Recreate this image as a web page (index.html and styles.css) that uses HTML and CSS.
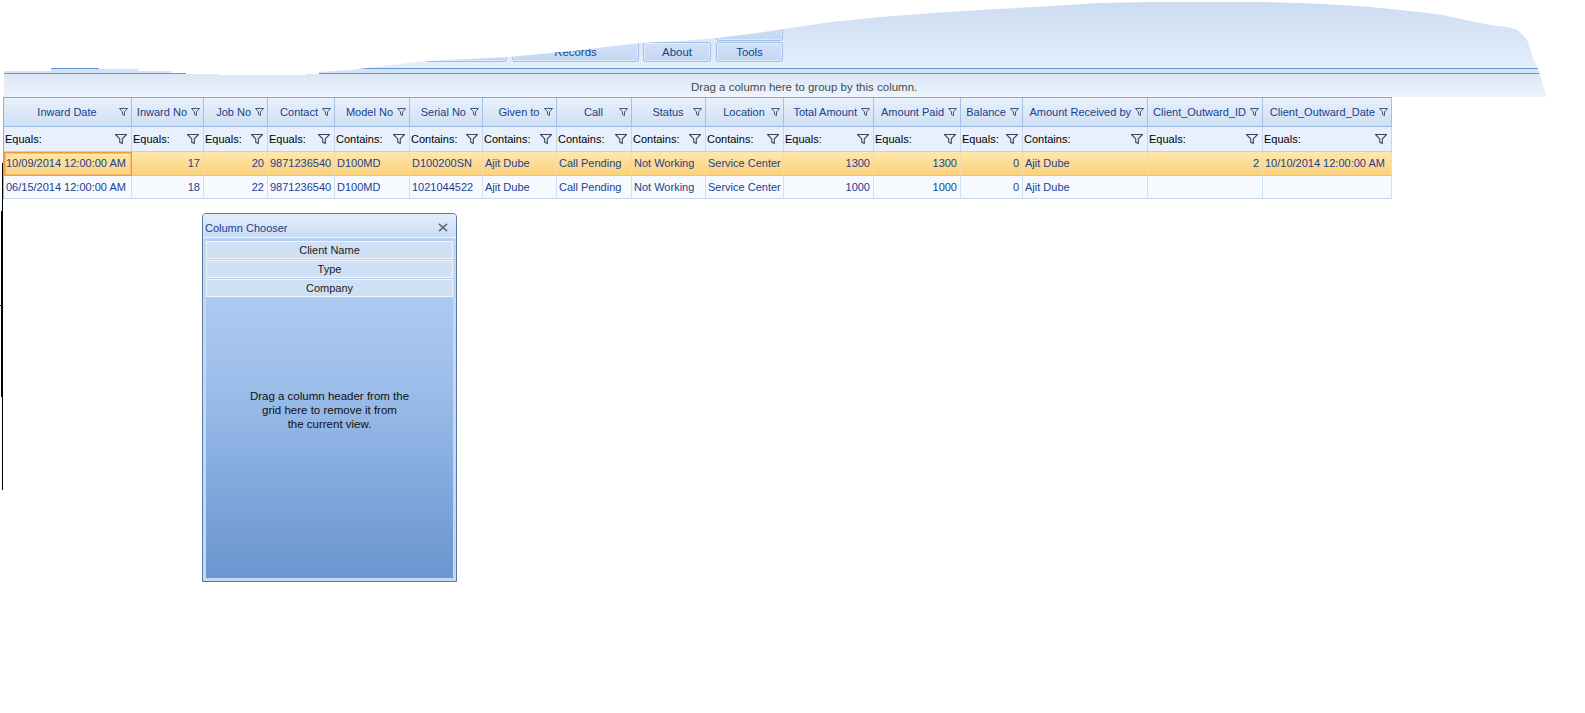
FILE: index.html
```html
<!DOCTYPE html>
<html>
<head>
<meta charset="utf-8">
<title>Grid</title>
<link rel="stylesheet" href="styles.css">
</head>
<body>
<svg class="defs" width="0" height="0" aria-hidden="true">
  <symbol id="fh" viewBox="0 0 9 8"><path d="M0.5 0.5H8.5L5.5 3.8V7.5L3.5 6.6V3.8Z" fill="none" stroke="currentColor" stroke-width="1" stroke-linejoin="round"/></symbol>
  <symbol id="ff" viewBox="0 0 12 10"><path d="M0.5 0.5H11.5L7.3 4.8V9.5L4.7 8.3V4.8Z" fill="none" stroke="currentColor" stroke-width="1.1" stroke-linejoin="round"/></symbol>
</svg>

<header class="top">
  <div class="band">
    <div class="ribbon">
      <div class="rb-btn w1"></div>
      <div class="rb-btn w2">Records</div>
      <div class="rb-btn w3">About</div>
      <div class="rb-stack">
        <div class="rb-btn w4"></div>
        <div class="rb-btn w4">Tools</div>
      </div>
    </div>
    <div class="rule"></div>
    <div class="rule-gap"></div>
    <div class="rule"></div>
    <div class="group-panel">Drag a column here to group by this column.</div>
  </div>
  <svg class="wave" width="1585" height="97" viewBox="0 0 1585 97" aria-hidden="true">
    <path fill="#ffffff" d="M0 0H1585V97H1547L1544 88L1540 75L1537 66L1533 58L1530 48L1527 40L1522 34L1517 30L1507 27L1490 25L1470 21L1443 15L1427 13L1400 10L1370 7L1341 5L1300 3L1260 2L1152 2L1100 3L1035 7L980 10L933 13L880 17L831 22L790 28L757 33L717 38L680 41L640 43L605 47L573 51L540 54L507 57L470 59L425 61L400 64L383 66L367 68L350 70L319 72V74H306V75H219V74H186V73H171V71H138V69H99V68H51V71H0Z"/>
  </svg>
</header>

<main class="grid">
  <div class="row head">
    <div class="hc"><span class="sl"></span><span class="ht">Inward Date</span><span class="sr"></span><svg class="fi-h"><use href="#fh"/></svg></div>
    <div class="hc"><span class="sl"></span><span class="ht">Inward No</span><span class="sr"></span><svg class="fi-h"><use href="#fh"/></svg></div>
    <div class="hc"><span class="sl"></span><span class="ht">Job No</span><span class="sr"></span><svg class="fi-h"><use href="#fh"/></svg></div>
    <div class="hc"><span class="sl"></span><span class="ht">Contact</span><span class="sr"></span><svg class="fi-h"><use href="#fh"/></svg></div>
    <div class="hc"><span class="sl"></span><span class="ht">Model No</span><span class="sr"></span><svg class="fi-h"><use href="#fh"/></svg></div>
    <div class="hc"><span class="sl"></span><span class="ht">Serial No</span><span class="sr"></span><svg class="fi-h"><use href="#fh"/></svg></div>
    <div class="hc"><span class="sl"></span><span class="ht">Given to</span><span class="sr"></span><svg class="fi-h"><use href="#fh"/></svg></div>
    <div class="hc"><span class="sl"></span><span class="ht">Call</span><span class="sr"></span><svg class="fi-h"><use href="#fh"/></svg></div>
    <div class="hc"><span class="sl"></span><span class="ht">Status</span><span class="sr"></span><svg class="fi-h"><use href="#fh"/></svg></div>
    <div class="hc"><span class="sl"></span><span class="ht">Location</span><span class="sr"></span><svg class="fi-h"><use href="#fh"/></svg></div>
    <div class="hc"><span class="sl"></span><span class="ht">Total Amount</span><span class="sr"></span><svg class="fi-h"><use href="#fh"/></svg></div>
    <div class="hc"><span class="sl"></span><span class="ht">Amount Paid</span><span class="sr"></span><svg class="fi-h"><use href="#fh"/></svg></div>
    <div class="hc"><span class="sl"></span><span class="ht">Balance</span><span class="sr"></span><svg class="fi-h"><use href="#fh"/></svg></div>
    <div class="hc"><span class="sl"></span><span class="ht">Amount Received by</span><span class="sr"></span><svg class="fi-h"><use href="#fh"/></svg></div>
    <div class="hc"><span class="sl"></span><span class="ht">Client_Outward_ID</span><span class="sr"></span><svg class="fi-h"><use href="#fh"/></svg></div>
    <div class="hc"><span class="sl"></span><span class="ht">Client_Outward_Date</span><span class="sr"></span><svg class="fi-h"><use href="#fh"/></svg></div>
  </div>

  <div class="row filter">
    <div class="fc"><span>Equals:</span><svg class="fi-f"><use href="#ff"/></svg></div>
    <div class="fc"><span>Equals:</span><svg class="fi-f"><use href="#ff"/></svg></div>
    <div class="fc"><span>Equals:</span><svg class="fi-f"><use href="#ff"/></svg></div>
    <div class="fc"><span>Equals:</span><svg class="fi-f"><use href="#ff"/></svg></div>
    <div class="fc"><span>Contains:</span><svg class="fi-f"><use href="#ff"/></svg></div>
    <div class="fc"><span>Contains:</span><svg class="fi-f"><use href="#ff"/></svg></div>
    <div class="fc"><span>Contains:</span><svg class="fi-f"><use href="#ff"/></svg></div>
    <div class="fc"><span>Contains:</span><svg class="fi-f"><use href="#ff"/></svg></div>
    <div class="fc"><span>Contains:</span><svg class="fi-f"><use href="#ff"/></svg></div>
    <div class="fc"><span>Contains:</span><svg class="fi-f"><use href="#ff"/></svg></div>
    <div class="fc"><span>Equals:</span><svg class="fi-f"><use href="#ff"/></svg></div>
    <div class="fc"><span>Equals:</span><svg class="fi-f"><use href="#ff"/></svg></div>
    <div class="fc"><span>Equals:</span><svg class="fi-f"><use href="#ff"/></svg></div>
    <div class="fc"><span>Contains:</span><svg class="fi-f"><use href="#ff"/></svg></div>
    <div class="fc"><span>Equals:</span><svg class="fi-f"><use href="#ff"/></svg></div>
    <div class="fc"><span>Equals:</span><svg class="fi-f"><use href="#ff"/></svg></div>
  </div>

  <div class="row data sel">
    <div class="dc cur">10/09/2014 12:00:00 AM</div>
    <div class="dc r">17</div>
    <div class="dc r">20</div>
    <div class="dc">9871236540</div>
    <div class="dc">D100MD</div>
    <div class="dc">D100200SN</div>
    <div class="dc">Ajit Dube</div>
    <div class="dc">Call Pending</div>
    <div class="dc">Not Working</div>
    <div class="dc">Service Center</div>
    <div class="dc r">1300</div>
    <div class="dc r">1300</div>
    <div class="dc r">0</div>
    <div class="dc">Ajit Dube</div>
    <div class="dc r">2</div>
    <div class="dc">10/10/2014 12:00:00 AM</div>
  </div>

  <div class="row data alt">
    <div class="dc">06/15/2014 12:00:00 AM</div>
    <div class="dc r">18</div>
    <div class="dc r">22</div>
    <div class="dc">9871236540</div>
    <div class="dc">D100MD</div>
    <div class="dc">1021044522</div>
    <div class="dc">Ajit Dube</div>
    <div class="dc">Call Pending</div>
    <div class="dc">Not Working</div>
    <div class="dc">Service Center</div>
    <div class="dc r">1000</div>
    <div class="dc r">1000</div>
    <div class="dc r">0</div>
    <div class="dc">Ajit Dube</div>
    <div class="dc r"></div>
    <div class="dc"></div>
  </div>
</main>

<section class="chooser">
  <div class="ch-title">
    <span>Column Chooser</span>
    <svg class="ch-close" width="10" height="9" viewBox="0 0 10 9" aria-hidden="true"><path d="M1 0.8L9 8.2M9 0.8L1 8.2" stroke="#5d6b7e" stroke-width="1.6"/></svg>
  </div>
  <div class="ch-frame">
    <div class="ch-body">
      <div class="ch-items">
        <div class="ch-item">Client Name</div>
        <div class="ch-item">Type</div>
        <div class="ch-item">Company</div>
      </div>
      <div class="ch-hint">Drag a column header from the<br>grid here to remove it from<br>the current view.</div>
    </div>
  </div>
</section>

<div class="glitch glitch-a"></div>
<div class="glitch glitch-b"></div>
<div class="glitch glitch-c"></div>
</body>
</html>
```

FILE: styles.css
```css
* { box-sizing: border-box; }

html, body {
  margin: 0;
  padding: 0;
  background: #ffffff;
}

body {
  position: relative;
  width: 1585px;
  height: 713px;
  overflow: hidden;
  font-family: "Liberation Sans", Arial, sans-serif;
  font-size: 11px;
  color: #15428b;
}

.defs {
  position: absolute;
  width: 0;
  height: 0;
  overflow: hidden;
}

/* ---------- top ribbon band ---------- */
.top {
  position: relative;
  height: 97px;
}

.band {
  margin-left: 4px;
}

.ribbon {
  height: 68px;
  background: linear-gradient(#cbdbf0, #e4effd);
  display: flex;
  align-items: flex-end;
  padding: 0 0 6px 421px;
}

.rb-btn {
  height: 20px;
  border: 1px solid #a2c0e7;
  border-radius: 3px;
  background: linear-gradient(#d2e2f6, #c2d7f1);
  box-shadow: inset 0 0 0 1px rgba(255, 255, 255, 0.45);
  color: #15428b;
  text-align: center;
  line-height: 18px;
  font-size: 11.4px;
  white-space: nowrap;
}

.w1 { width: 82px; margin-right: 5px; }
.w2 { width: 127px; margin-right: 4px; }
.w3 { width: 68px; margin-right: 5px; }
.w4 { width: 67px; }

.rb-stack {
  display: flex;
  flex-direction: column;
  gap: 1px;
}

.rule {
  height: 1px;
  background: #6b97d2;
}

.rule-gap {
  height: 4px;
  background: #d3e3f7;
}

.group-panel {
  height: 23px;
  background: linear-gradient(#dbe7f7, #eef4fc);
  color: #4a4a4a;
  font-size: 11.5px;
  line-height: 14px;
  padding: 6px 0 0 687px;
  white-space: nowrap;
}

.wave {
  position: absolute;
  left: 0;
  top: 0;
  display: block;
}

/* ---------- grid ---------- */
.grid {
  --cols: 128px 72px 64px 67px 75px 73px 74px 75px 74px 78px 90px 87px 62px 125px 115px 129px;
  margin-left: 3px;
  width: 1389px;
  border-left: 1px solid #8fb0d9;
  border-top: 1px solid #8aa8d3;
}

.row {
  display: grid;
  grid-template-columns: var(--cols);
}

.hc {
  height: 29px;
  display: flex;
  align-items: center;
  padding: 0 3px 0 2px;
  overflow: hidden;
  background: linear-gradient(#e8f0fa 0%, #dde8f7 50%, #cfdff4 100%);
  border-right: 1px solid #a4c0e6;
  border-bottom: 1px solid #9ab7df;
  color: #15428b;
}

.sl {
  flex: 1 1 13px;
  min-width: 0;
}

.sr {
  flex: 1 1 0;
  min-width: 0;
}

.ht {
  flex: none;
  white-space: nowrap;
}

.fi-h {
  flex: none;
  width: 9px;
  height: 8px;
  margin-left: 4px;
  color: #43597f;
}

.fc {
  height: 25px;
  display: flex;
  align-items: center;
  justify-content: space-between;
  padding: 0 4px 0 1px;
  overflow: hidden;
  background: #e7f0fc;
  border-right: 1px solid #c3d7f0;
  border-bottom: 1px solid #bcd1ec;
  color: #000000;
  white-space: nowrap;
}

.fi-f {
  flex: none;
  width: 12px;
  height: 10px;
  color: #3a4558;
}

.dc {
  padding: 0 3px 0 2px;
  overflow: hidden;
  white-space: nowrap;
  color: #1c418f;
}

.dc.r {
  text-align: right;
}

.sel .dc {
  height: 24px;
  line-height: 23px;
  background: linear-gradient(#fee8ad 0%, #fddc93 50%, #fcd27d 100%);
  border-right: 1px solid #f7dcaa;
  border-bottom: 1px solid #f3c264;
}

.sel .dc.cur {
  border: 1px solid #f29a3a;
  box-shadow: inset 0 0 0 1px #f8bd6e;
  line-height: 21px;
  padding-left: 1px;
}

.alt .dc {
  height: 23px;
  line-height: 22px;
  background: #f6faff;
  border-right: 1px solid #d1e1f5;
  border-bottom: 1px solid #c6d9f1;
}

/* ---------- column chooser (floating window) ---------- */
.chooser {
  position: absolute;
  left: 202px;
  top: 213px;
  width: 255px;
  height: 369px;
  border: 1px solid #5b79a2;
  border-radius: 4px 4px 0 0;
  background: #c3d8f3;
  display: flex;
  flex-direction: column;
}

.ch-title {
  height: 24px;
  flex: none;
  display: flex;
  align-items: center;
  justify-content: space-between;
  padding: 4px 8px 0 2px;
  background: linear-gradient(#e4eefb, #cadcf4);
  border-bottom: 1px solid #eef4fc;
  border-radius: 3px 3px 0 0;
  color: #15428b;
  font-size: 11px;
  white-space: nowrap;
}

.ch-close {
  display: block;
}

.ch-frame {
  flex: 1;
  display: flex;
  padding: 0 3px 3px 3px;
}

.ch-body {
  flex: 1;
  display: grid;
  background: linear-gradient(#b7d1f4 0%, #9fc0ec 40%, #6a95cf 100%);
  padding-top: 3px;
}

.ch-items {
  grid-area: 1 / 1;
  align-self: start;
  display: flex;
  flex-direction: column;
  gap: 1px;
}

.ch-item {
  height: 18px;
  border: 1px solid #eef5fd;
  background: #cfe0f5;
  color: #1a1a1a;
  text-align: center;
  line-height: 16px;
}

.ch-hint {
  grid-area: 1 / 1;
  align-self: center;
  text-align: center;
  color: #111111;
  line-height: 14px;
  font-size: 11.5px;
}

/* ---------- stray redraw artifacts on the left edge ---------- */
.glitch {
  position: absolute;
  background: #000000;
}

.glitch-a {
  left: 2px;
  top: 163px;
  width: 1px;
  height: 327px;
}

.glitch-b {
  left: 1px;
  top: 211px;
  width: 2px;
  height: 186px;
}

.glitch-c {
  left: 0;
  top: 305px;
  width: 2px;
  height: 1px;
}
```
